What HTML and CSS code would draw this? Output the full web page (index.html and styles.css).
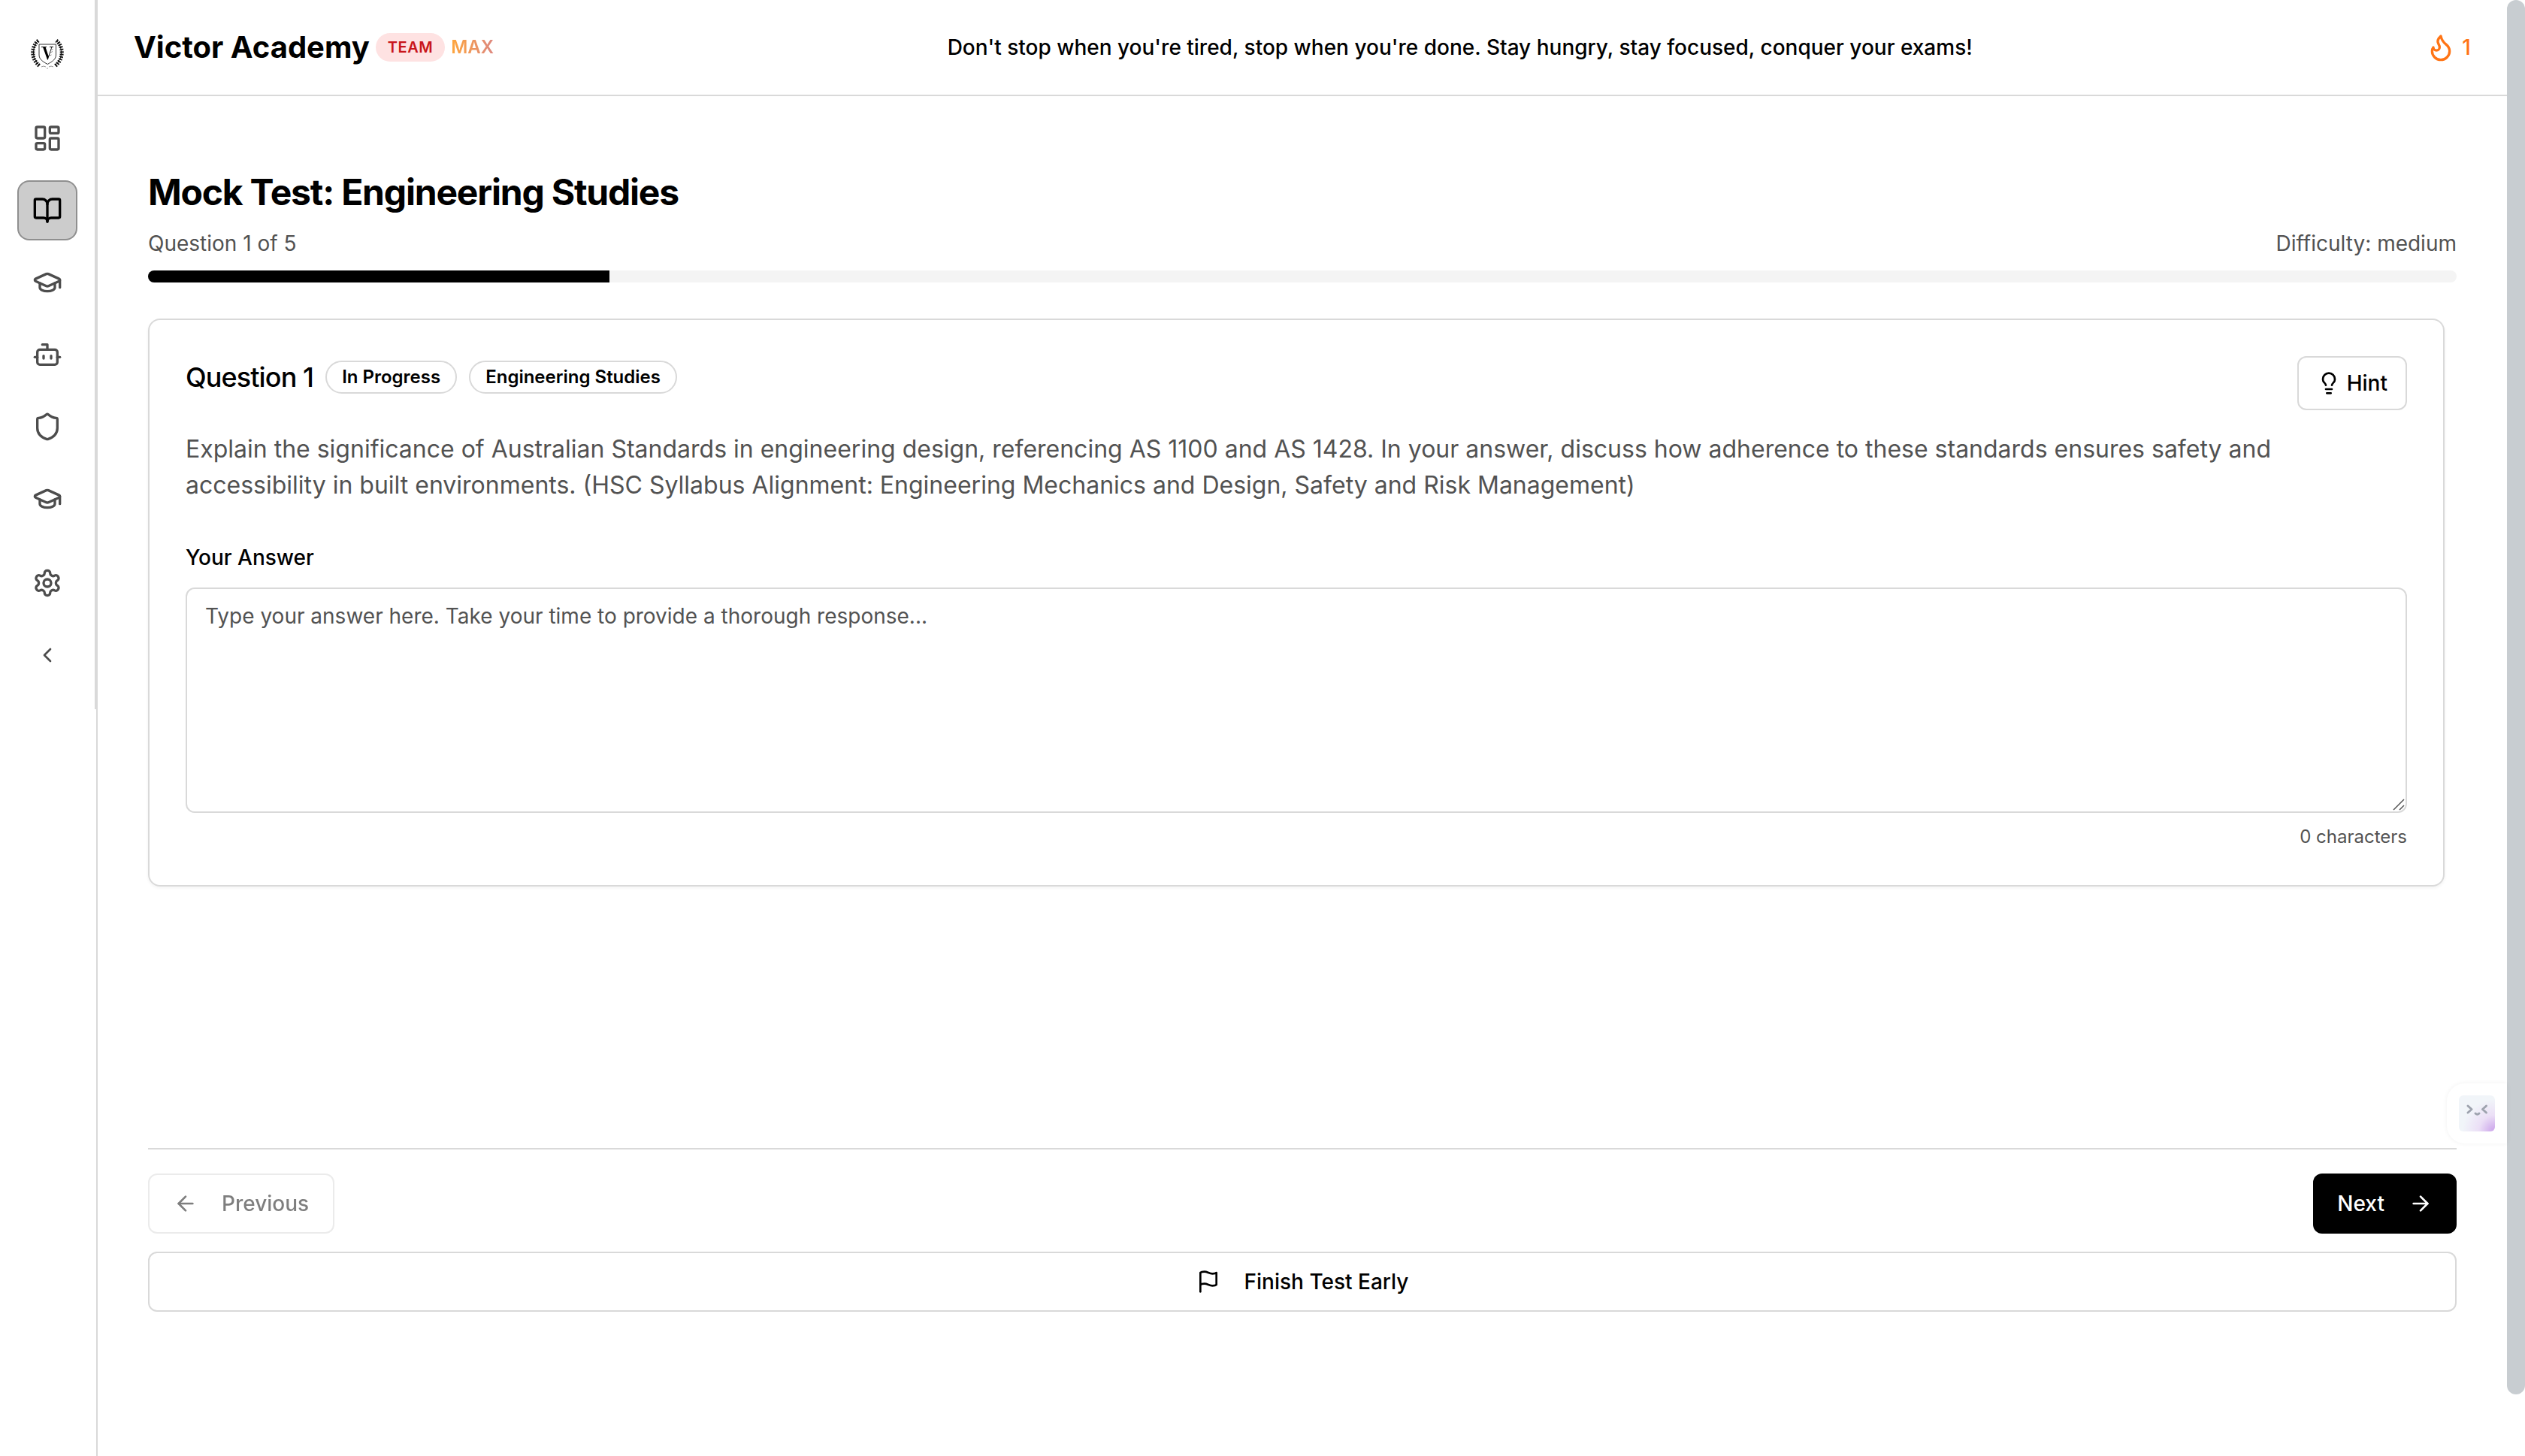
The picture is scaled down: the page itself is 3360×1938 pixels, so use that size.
FILE: index.html
```html
<!DOCTYPE html>
<html lang="en">
<head>
    <meta charset="UTF-8">
    <meta name="viewport" content="width=device-width, initial-scale=1.0">
    <title>Mock Test: Engineering Studies</title>
    <link rel="stylesheet" href="styles.css">
</head>
<body>

    <div class="app">
        <!-- Sidebar -->
        <aside class="sidebar">
            <nav class="sidebar-nav" aria-label="Main">
                <a href="#" class="logo" aria-label="Victor Academy">
                    <svg width="48" height="48" viewBox="0 0 48 48" fill="none">
                        <path d="M13 11h22.500v14c0 6-5 9-11.250 12.500C18 34 13 31 13 25z" stroke="#333" stroke-width="1"/>
                        <path d="M16 14.500h7M27 14.500h5" stroke="#000" stroke-width="1"/>
                        <path d="M18 14.500h3.500l4 12 4-12h.800l-5.500 17h-.800z" fill="#000"/>
                        <path d="M28 22l3-1.500M27 26l2.500-1M29 18.500l2.500-1" stroke="#888" stroke-width="1"/>
                        <path d="M12 6C4 13 2 30 14 39M36 6c8 7 10 24-2 33" stroke="#000" stroke-width="1"/>
                        <path d="M12 6C3 13 1 30 14 40M36 6c9 7 11 24-2 34" stroke="#111" stroke-width="5" stroke-dasharray="1.800 1.500"/>
                        <path d="M16 41q3-2 6 0M32 41q-3-2-6 0M23 43h2" stroke="#999" stroke-width="1"/>
                    </svg>
                </a>
                <div class="nav-group">
                    <a href="#" class="nav-item" aria-label="Dashboard">
                        <svg class="icon" viewBox="0 0 24 24"><rect width="7" height="9" x="3" y="3" rx="1"/><rect width="7" height="5" x="14" y="3" rx="1"/><rect width="7" height="9" x="14" y="12" rx="1"/><rect width="7" height="5" x="3" y="16" rx="1"/></svg>
                    </a>
                    <a href="#" class="nav-item active" aria-label="Mock tests">
                        <svg class="icon" viewBox="0 0 24 24"><path d="M12 7v14"/><path d="M3 18a1 1 0 0 1-1-1V4a1 1 0 0 1 1-1h5a4 4 0 0 1 4 4 4 4 0 0 1 4-4h5a1 1 0 0 1 1 1v13a1 1 0 0 1-1 1h-6a3 3 0 0 0-3 3 3 3 0 0 0-3-3z"/></svg>
                    </a>
                    <a href="#" class="nav-item" aria-label="Courses">
                        <svg class="icon" viewBox="0 0 24 24"><path d="M21.420 10.922a1 1 0 0 0-.019-1.838L12.830 5.180a2 2 0 0 0-1.660 0L2.600 9.080a1 1 0 0 0 0 1.832l8.570 3.908a2 2 0 0 0 1.660 0z"/><path d="M22 10v6"/><path d="M6 12.500V16a6 3 0 0 0 12 0v-3.500"/></svg>
                    </a>
                    <a href="#" class="nav-item" aria-label="Tutor bot">
                        <svg class="icon" viewBox="0 0 24 24"><path d="M12 8V4H8"/><rect width="16" height="12" x="4" y="8" rx="2"/><path d="M2 14h2"/><path d="M20 14h2"/><path d="M15 13v2"/><path d="M9 13v2"/></svg>
                    </a>
                    <a href="#" class="nav-item" aria-label="Shield">
                        <svg class="icon" viewBox="0 0 24 24"><path d="M20 13c0 5-3.500 7.500-7.660 8.950a1 1 0 0 1-.67-.01C7.500 20.500 4 18 4 13V6a1 1 0 0 1 1-1c2 0 4.500-1.200 6.240-2.720a1.170 1.170 0 0 1 1.520 0C14.510 3.810 17 5 19 5a1 1 0 0 1 1 1z"/></svg>
                    </a>
                    <a href="#" class="nav-item" aria-label="Study">
                        <svg class="icon" viewBox="0 0 24 24"><path d="M21.420 10.922a1 1 0 0 0-.019-1.838L12.830 5.180a2 2 0 0 0-1.660 0L2.600 9.080a1 1 0 0 0 0 1.832l8.570 3.908a2 2 0 0 0 1.660 0z"/><path d="M22 10v6"/><path d="M6 12.500V16a6 3 0 0 0 12 0v-3.500"/></svg>
                    </a>
                </div>
                <div class="nav-group">
                    <a href="#" class="nav-item" aria-label="Settings">
                        <svg class="icon" viewBox="0 0 24 24"><path d="M12.220 2h-.44a2 2 0 0 0-2 2v.18a2 2 0 0 1-1 1.730l-.43.25a2 2 0 0 1-2 0l-.15-.08a2 2 0 0 0-2.730.73l-.22.38a2 2 0 0 0 .73 2.730l.15.1a2 2 0 0 1 1 1.720v.51a2 2 0 0 1-1 1.740l-.15.09a2 2 0 0 0-.73 2.730l.22.38a2 2 0 0 0 2.730.73l.15-.08a2 2 0 0 1 2 0l.43.25a2 2 0 0 1 1 1.730V20a2 2 0 0 0 2 2h.44a2 2 0 0 0 2-2v-.18a2 2 0 0 1 1-1.730l.43-.25a2 2 0 0 1 2 0l.15.08a2 2 0 0 0 2.730-.73l.22-.39a2 2 0 0 0-.73-2.730l-.15-.08a2 2 0 0 1-1-1.740v-.5a2 2 0 0 1 1-1.740l.15-.09a2 2 0 0 0 .73-2.730l-.22-.38a2 2 0 0 0-2.730-.73l-.15.08a2 2 0 0 1-2 0l-.43-.25a2 2 0 0 1-1-1.730V4a2 2 0 0 0-2-2z"/><circle cx="12" cy="12" r="3"/></svg>
                    </a>
                    <button type="button" class="nav-item" aria-label="Collapse sidebar">
                        <svg class="icon icon-sm" viewBox="0 0 24 24"><path d="m15 18-6-6 6-6"/></svg>
                    </button>
                </div>
            </nav>
        </aside>

        <div class="content">
            <!-- Top bar -->
            <header class="topbar">
                <div class="brand">
                    <span class="brand-name">Victor Academy</span>
                    <span class="team-badge">TEAM</span>
                    <span class="plan">MAX</span>
                </div>
                <p class="motto">Don't stop when you're tired, stop when you're done. Stay hungry, stay focused, conquer your exams!</p>
                <div class="streak">
                    <svg class="icon" viewBox="0 0 24 24"><path d="M8.500 14.500A2.500 2.500 0 0 0 11 12c0-1.380-.5-2-1-3-1.072-2.143-.224-4.054 2-6 .5 2.500 2 4.900 4 6.500 2 1.600 3 3.500 3 5.500a7 7 0 1 1-14 0c0-1.153.433-2.294 1-3a2.500 2.500 0 0 0 2.500 2.500z"/></svg>
                    <span>1</span>
                </div>
            </header>

            <!-- Test -->
            <main class="test">
                <h1>Mock Test: Engineering Studies</h1>
                <div class="test-info">
                    <span>Question 1 of 5</span>
                    <span>Difficulty: medium</span>
                </div>
                <div class="progress">
                    <div class="progress-bar" style="width: 20%"></div>
                </div>

                <div class="question-area">
                    <section class="card">
                        <div class="card-header">
                            <div class="question">
                                <div class="question-title">
                                    <h2>Question 1</h2>
                                    <span class="badge">In Progress</span>
                                    <span class="badge">Engineering Studies</span>
                                </div>
                                <p class="question-text">Explain the significance of Australian Standards in engineering design, referencing AS 1100 and AS 1428. In your answer, discuss how adherence to these standards ensures safety and accessibility in built environments. (HSC Syllabus Alignment: Engineering Mechanics and Design, Safety and Risk Management)</p>
                            </div>
                            <button type="button" class="btn btn-hint">
                                <svg class="icon icon-sm" viewBox="0 0 24 24"><path d="M15 14c.2-1 .7-1.700 1.500-2.500 1-.9 1.500-2.200 1.500-3.500A6 6 0 0 0 6 8c0 1 .2 2.200 1.500 3.500.7.7 1.300 1.500 1.500 2.500"/><path d="M9 18h6"/><path d="M10 22h4"/></svg>
                                Hint
                            </button>
                        </div>
                        <label class="answer-label" for="answer">Your Answer</label>
                        <div class="answer-box">
                            <textarea id="answer" placeholder="Type your answer here. Take your time to provide a thorough response..."></textarea>
                            <svg class="resize-grip" viewBox="0 0 16 16"><path d="M1 15 15 1M9 15l6-6"/></svg>
                        </div>
                        <p class="char-count">0 characters</p>
                    </section>
                </div>

                <div class="actions">
                    <div class="actions-row">
                        <button type="button" class="btn" disabled>
                            <svg class="icon icon-sm" viewBox="0 0 24 24"><path d="m12 19-7-7 7-7"/><path d="M19 12H5"/></svg>
                            Previous
                        </button>
                        <button type="button" class="btn btn-primary">
                            Next
                            <svg class="icon icon-sm" viewBox="0 0 24 24"><path d="M5 12h14"/><path d="m12 5 7 7-7 7"/></svg>
                        </button>
                    </div>
                    <button type="button" class="btn">
                        <svg class="icon icon-sm" viewBox="0 0 24 24"><path d="M4 15s1-1 4-1 5 2 8 2 4-1 4-1V3s-1 1-4 1-5-2-8-2-4 1-4 1z"/><path d="M4 22v-7"/></svg>
                        Finish Test Early
                    </button>
                </div>
            </main>
        </div>

        <!-- Scrollbar -->
        <div class="scrollbar">
            <div class="scrollbar-thumb"></div>
        </div>
    </div>

    <!-- Floating assistant -->
    <button type="button" class="assistant" aria-label="Open assistant">
        <svg width="48" height="48" viewBox="0 0 48 48" fill="none">
            <defs>
                <radialGradient id="face" cx="1" cy="1" r="0.900">
                    <stop offset="0" stop-color="#c9a0ea"/>
                    <stop offset="0.500" stop-color="#ebdff6"/>
                    <stop offset="1" stop-color="#f1f5f9"/>
                </radialGradient>
            </defs>
            <rect width="48" height="48" rx="6" fill="url(#face)"/>
            <path d="M12 14l5 4.500-5 4.500M36.500 14l-5 4.500 5 4.500M22 24q2.500 2.500 5 0" stroke="#9ea3ae" stroke-width="3" stroke-linecap="round" stroke-linejoin="round"/>
        </svg>
    </button>

</body>
</html>
```
FILE: styles.css
```css
/* General Styles */
* {
    box-sizing: border-box;
}

body {
    font-family: Inter, "Liberation Sans", sans-serif;
    font-size: 28px;
    line-height: 40px;
    background-color: #fff;
    margin: 0;
    color: #000;
}

h1, h2, p {
    margin: 0;
}

button, textarea {
    font: inherit;
    color: inherit;
}

.icon {
    width: 40px;
    height: 40px;
    flex: none;
    fill: none;
    stroke: currentColor;
    stroke-width: 2;
    stroke-linecap: round;
    stroke-linejoin: round;
}

.icon-sm {
    width: 32px;
    height: 32px;
}

.app {
    display: flex;
    min-height: 100vh;
}

/* Sidebar */
.sidebar {
    flex: none;
    border-right: 2px solid #d9d9d9;
}

.sidebar-nav {
    display: flex;
    flex-direction: column;
    align-items: center;
    gap: 32px;
    padding: 48px 23px 32px;
    border-right: 2px solid #d9d9d9;
}

.logo {
    display: flex;
    margin-bottom: 16px;
}

.nav-group {
    display: flex;
    flex-direction: column;
    gap: 16px;
}

.nav-item {
    display: flex;
    align-items: center;
    justify-content: center;
    width: 80px;
    height: 80px;
    padding: 0;
    border: 2px solid transparent;
    border-radius: 16px;
    background: none;
    color: #4d4d4d;
    cursor: pointer;
}

.nav-item.active {
    background-color: #ccc;
    border-color: #8f8f8f;
    color: #000;
}

/* Top bar */
.content {
    flex: 1;
    min-width: 0;
    display: flex;
    flex-direction: column;
}

.topbar {
    display: flex;
    align-items: center;
    justify-content: space-between;
    height: 128px;
    padding: 0 48px;
    border-bottom: 2px solid #d9d9d9;
}

.brand, .streak {
    display: flex;
    align-items: center;
    gap: 8px;
}

.brand-name {
    font-size: 40px;
    font-weight: 700;
}

.team-badge {
    padding: 4px 16px;
    border-radius: 20px;
    background-color: #fee2e2;
    color: #c8151b;
    font-size: 20px;
    line-height: 30px;
    font-weight: 600;
    letter-spacing: 0.025em;
}

.plan {
    font-size: 24px;
    font-weight: 600;
    background: linear-gradient(to right, #ffa63c, #dd877f);
    background-clip: text;
    -webkit-background-clip: text;
    color: transparent;
}

.motto {
    font-weight: 500;
}

.streak {
    color: #ff7415;
    font-weight: 500;
}

/* Test */
.test {
    flex: 1;
    display: flex;
    flex-direction: column;
    width: 100%;
    max-width: 3072px;
    margin: 0 auto;
    padding: 96px 0 192px;
}

h1 {
    font-size: 48px;
    line-height: 64px;
    font-weight: 700;
    letter-spacing: -0.025em;
}

.test-info {
    display: flex;
    justify-content: space-between;
    margin: 16px 0;
    color: #525252;
}

.progress {
    height: 16px;
    border-radius: 8px;
    background-color: #f4f4f4;
    overflow: hidden;
}

.progress-bar {
    height: 100%;
    background-color: #000;
}

.question-area {
    flex: 1;
    padding: 48px 16px 48px 0;
}

.card {
    padding: 48px;
    border: 2px solid #d9d9d9;
    border-radius: 16px;
    box-shadow: 0 2px 4px rgba(0, 0, 0, 0.05);
}

.card-header {
    display: flex;
    align-items: flex-start;
    gap: 32px;
    margin-bottom: 48px;
}

.question {
    flex: 1;
    display: flex;
    flex-direction: column;
    gap: 44px;
}

.question-title {
    display: flex;
    align-items: center;
    gap: 16px;
}

h2 {
    font-size: 36px;
    line-height: 56px;
    font-weight: 500;
    letter-spacing: -0.025em;
}

.badge {
    padding: 4px 20px;
    border: 2px solid #d9d9d9;
    border-radius: 22px;
    font-size: 24px;
    line-height: 32px;
    font-weight: 600;
}

.question-text {
    font-size: 32px;
    line-height: 48px;
    color: #525252;
}

.answer-label {
    display: block;
    margin-bottom: 16px;
    line-height: 48px;
    font-weight: 500;
}

.answer-box {
    position: relative;
    display: flex;
}

textarea {
    width: 100%;
    height: 300px;
    padding: 16px 24px;
    border: 2px solid #d9d9d9;
    border-radius: 12px;
    background-color: #fff;
    resize: none;
}

textarea::placeholder {
    color: #525252;
    opacity: 1;
}

.resize-grip {
    position: absolute;
    right: 3px;
    bottom: 3px;
    width: 16px;
    height: 16px;
    fill: none;
    stroke: #555;
    stroke-width: 1.5;
    pointer-events: none;
}

.char-count {
    margin-top: 16px;
    font-size: 24px;
    line-height: 32px;
    color: #525252;
    text-align: right;
}

/* Buttons */
.btn {
    display: flex;
    align-items: center;
    justify-content: center;
    gap: 32px;
    height: 80px;
    padding: 0 32px;
    border: 2px solid #d9d9d9;
    border-radius: 12px;
    background-color: #fff;
    font-weight: 500;
    cursor: pointer;
}

.btn:disabled {
    opacity: 0.5;
    cursor: default;
}

.btn-primary {
    border: none;
    background-color: #000;
    color: #fff;
}

.btn-hint {
    flex: none;
    gap: 8px;
    height: 72px;
    padding: 0 24px;
}

.actions {
    display: flex;
    flex-direction: column;
    gap: 24px;
    padding-top: 32px;
    border-top: 2px solid #d9d9d9;
}

.actions-row {
    display: flex;
    justify-content: space-between;
}

/* Scrollbar */
.scrollbar {
    flex: none;
    width: 24px;
    padding-bottom: 82px;
    display: flex;
}

.scrollbar-thumb {
    width: 100%;
    border-radius: 12px;
    background-color: #c8cdd1;
}

/* Assistant */
.assistant {
    position: fixed;
    right: 24px;
    bottom: 416px;
    display: flex;
    padding: 16px;
    border: none;
    border-radius: 24px 0 0 24px;
    background-color: #fff;
    box-shadow: 0 0 6px rgba(0, 0, 0, 0.06);
    cursor: pointer;
}
```
